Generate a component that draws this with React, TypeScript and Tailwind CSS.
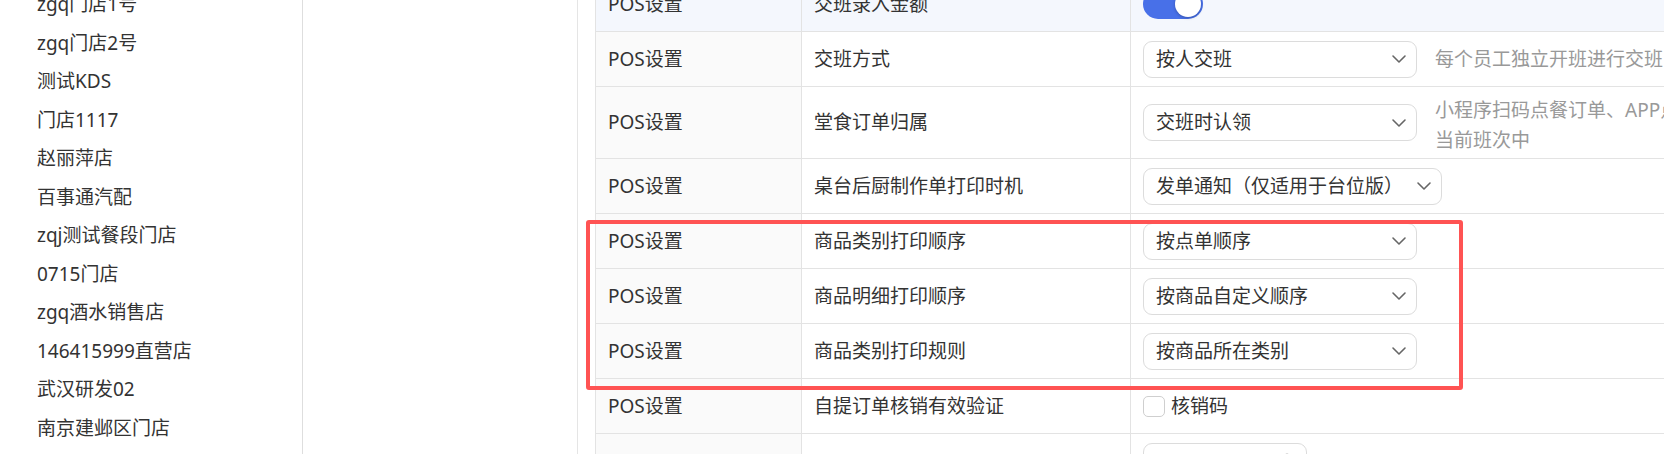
import { ChevronDown, Clock } from 'lucide-react'
import type { ReactNode } from 'react'

const stores = [
  'zgq门店1号',
  'zgq门店2号',
  '测试KDS',
  '门店1117',
  '赵丽萍店',
  '百事通汽配',
  'zqj测试餐段门店',
  '0715门店',
  'zgq酒水销售店',
  '146415999直营店',
  '武汉研发02',
  '南京建邺区门店',
]

function Select({ label, width }: { label: string; width: string }) {
  return (
    <div
      className={`flex shrink-0 items-center justify-between h-[37px] border border-[#dcdcdc] rounded-[9px] pl-[12px] pr-[5px] bg-white ${width}`}
    >
      <span className="text-[#333] whitespace-nowrap">{label}</span>
      <ChevronDown size={24} strokeWidth={1.6} className="text-[#666] shrink-0" />
    </div>
  )
}

function Row({
  group,
  name,
  height = 'h-[55px]',
  hover = false,
  top = false,
  children,
}: {
  group: string
  name: string
  height?: string
  hover?: boolean
  top?: boolean
  children?: ReactNode
}) {
  return (
    <div className={`flex border-b border-[#e3e3e3] ${height} ${hover ? 'bg-[#f4f7fd]' : ''}`}>
      <div
        className={`w-[206px] shrink-0 flex items-center pl-[12px] border-r border-[#e3e3e3] text-[#333] ${
          hover ? '' : 'bg-[#fafafa]'
        }`}
      >
        {group}
      </div>
      <div className="w-[329px] shrink-0 flex items-center pl-[12px] border-r border-[#e3e3e3] text-[#333] whitespace-nowrap">
        {name}
      </div>
      <div className={`flex-1 flex pl-[12px] min-w-0 ${top ? 'items-start pt-[9px]' : 'items-center'}`}>
        {children}
      </div>
    </div>
  )
}

export default function App() {
  return (
    <div
      className="relative flex h-[454px] w-full overflow-hidden bg-white text-[19px]"
      style={{ fontFamily: '"Noto Sans", "Noto Sans CJK SC", sans-serif' }}
    >
      {/* Store list */}
      <div className="w-[303px] shrink-0 border-r border-[#dedede]">
        <div className="-mt-[14.75px]">
          {stores.map((s) => (
            <div key={s} className="h-[38.5px] flex items-center pl-[37px] text-[#333] whitespace-nowrap">
              {s}
            </div>
          ))}
        </div>
      </div>

      {/* Middle panel */}
      <div className="w-[275px] shrink-0 border-r border-[#e5e5e5]" />

      {/* Settings table */}
      <div className="flex-1 min-w-0 pl-[17px]">
        <div className="-mt-[23px] border-l border-[#e3e3e3]">
          <Row group="POS设置" name="交班录入金额" hover>
            <div className="flex justify-end items-center w-[60px] h-[30px] rounded-full bg-[#4870e8] p-[2px]">
              <div className="w-[26px] h-[26px] rounded-full bg-white shadow-[0_1px_3px_rgba(0,0,0,0.25)]" />
            </div>
          </Row>
          <Row group="POS设置" name="交班方式">
            <Select label="按人交班" width="w-[274px]" />
            <span className="ml-[18px] text-[#999] whitespace-nowrap">
              每个员工独立开班进行交班，交班时仅统计本人的收银数据
            </span>
          </Row>
          <Row group="POS设置" name="堂食订单归属" height="h-[72px]">
            <Select label="交班时认领" width="w-[274px]" />
            <div className="ml-[18px] text-[#999] leading-[30px] mt-[4px]">
              <div className="whitespace-nowrap">小程序扫码点餐订单、APP点餐订单在交班时由收银员认领，归属到</div>
              <div className="whitespace-nowrap">当前班次中</div>
            </div>
          </Row>
          <Row group="POS设置" name="桌台后厨制作单打印时机">
            <Select label="发单通知（仅适用于台位版）" width="w-[299px]" />
          </Row>
          <Row group="POS设置" name="商品类别打印顺序">
            <Select label="按点单顺序" width="w-[274px]" />
          </Row>
          <Row group="POS设置" name="商品明细打印顺序">
            <Select label="按商品自定义顺序" width="w-[274px]" />
          </Row>
          <Row group="POS设置" name="商品类别打印规则">
            <Select label="按商品所在类别" width="w-[274px]" />
          </Row>
          <Row group="POS设置" name="自提订单核销有效验证">
            <div className="flex items-center">
              <div className="w-[22px] h-[21px] rounded-[5px] border border-[#cfcfcf] bg-white" />
              <span className="ml-[6px] text-[#333]">核销码</span>
            </div>
          </Row>
          <Row group="POS设置" name="订单自动完成时间" height="h-[72px]" top>
            <div className="flex items-center justify-between h-[37px] w-[164px] border border-[#dcdcdc] rounded-[9px] pl-[12px] pr-[10px]">
              <span className="text-[#333]">00:00</span>
              <Clock size={18} strokeWidth={1.8} className="text-[#555]" />
            </div>
          </Row>
        </div>
      </div>

      {/* Red annotation box */}
      <div className="absolute left-[586px] top-[220px] w-[877px] h-[170px] border-4 border-[#ff5353] rounded-[3px] pointer-events-none" />
    </div>
  )
}
